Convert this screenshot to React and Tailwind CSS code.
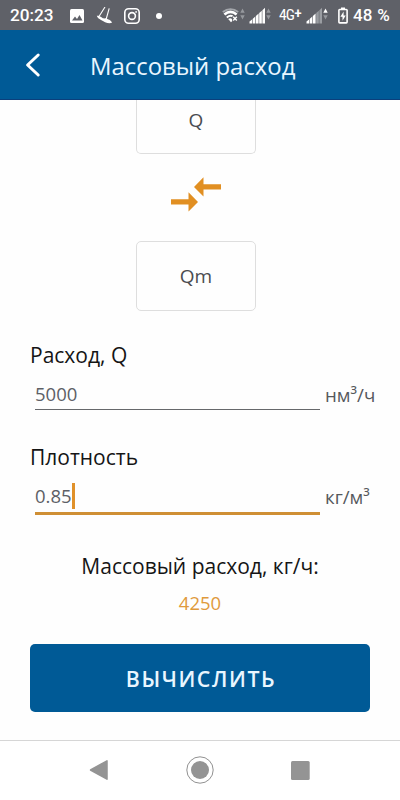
import { useState } from 'react';

function DataArrows({ up = '#96999e', down = '#96999e', className }) {
  return (
    <svg viewBox="0 0 5 12" className={className}>
      <path d="M2.5 0.5 L4.7 4.8 H0.3 Z" fill={up} />
      <path d="M2.5 11.5 L4.7 7.2 H0.3 Z" fill={down} />
    </svg>
  );
}

function Signal({ weak, className }) {
  return (
    <svg viewBox="0 0 17 17" className={className}>
      <path d="M0.5 14.5 L3 12.5 V16.5 H0.5 Z M3.6 12 L6.3 9.6 V16.5 H3.6 Z M6.9 9 L9.6 6.6 V16.5 H6.9 Z" fill="#fff" />
      <path d="M10.2 6 L12.8 3.7 V16.5 H10.2 Z" fill={weak ? '#9a9da2' : '#fff'} />
      <path d="M13.4 3.2 L16 0.8 V16.5 H13.4 Z" fill={weak ? '#9a9da2' : '#fff'} />
    </svg>
  );
}

function StatusBar() {
  return (
    <div className="flex h-[30px] flex-shrink-0 items-center bg-[#5f6168] pl-[10px] pt-px font-[Roboto,sans-serif] text-white">
      <span className="w-[60px] text-[17.2px] font-medium leading-none">20:23</span>

      {/* Gallery */}
      <svg viewBox="0 0 14 14" className="h-[14px] w-[14px] flex-shrink-0">
        <rect width="14" height="14" rx="1.5" fill="#fff" />
        <path d="M2 11.5 L5 7.5 L7 10 L9.5 6 L12.5 11.5 Z" fill="#5f6168" />
      </svg>

      {/* Step counter */}
      <svg viewBox="0 0 17 17" className="ml-[12px] h-[17px] w-[17px] flex-shrink-0">
        <path d="M0.8 8.8 C2.5 8.3 4 9 5.5 10.3 C7 11.8 8.5 11.3 10 11.3 C12.5 12.5 15.5 13.5 16 15.8 C12.5 17.2 8 14.8 5 13 C3 11.8 1.3 10.8 0.8 8.8 Z" fill="#fff" />
        <path d="M9 0 L3.3 9 M13.2 1.3 L10.2 12" stroke="#fff" strokeWidth="1.1" fill="none" />
      </svg>

      {/* Instagram */}
      <svg viewBox="0 0 16 16" className="ml-[11px] h-4 w-4 flex-shrink-0" fill="none" stroke="#fff" strokeWidth="1.6">
        <rect x="0.8" y="0.8" width="14.4" height="14.4" rx="3.8" />
        <circle cx="8" cy="8" r="3.4" />
        <circle cx="12.1" cy="3.9" r="0.9" fill="#fff" stroke="none" />
      </svg>

      <span className="ml-4 h-[6px] w-[6px] flex-shrink-0 rounded-full bg-white" />

      {/* Wi-Fi without internet */}
      <svg viewBox="0 0 17 15" className="ml-[60px] h-[15px] w-[17px] flex-shrink-0" fill="none">
        <path d="M0.8 4 C5.5 0.3 11.5 0.3 16.2 4" stroke="#a3a6ab" strokeWidth="1.8" />
        <path d="M2.4 6.5 C6.2 3.1 10.8 3.1 14.6 6.5" stroke="#fff" strokeWidth="2.6" />
        <path d="M4.8 9.4 C7 7.6 9 7.4 10.6 8.2" stroke="#fff" strokeWidth="2" />
        <path d="M6.2 11 Q8 9.6 9.8 10.8 L10.3 13 L9 14.3 Z" fill="#fff" />
        <path d="M11.2 8.8 L14.8 12.6 M14.8 8.8 L11.2 12.6" stroke="#fff" strokeWidth="1.4" />
      </svg>
      <DataArrows className="mb-1 ml-px h-[12px] w-[5px] flex-shrink-0" />
      <Signal className="ml-1 h-[17px] w-[17px] flex-shrink-0" />
      <DataArrows className="mb-1 h-[12px] w-[5px] flex-shrink-0" />

      <span className="ml-[8px] flex w-[27px] items-center whitespace-nowrap font-['Roboto_Condensed',Roboto,sans-serif] text-[15.5px] leading-none tracking-[-0.8px]">
        4G<span className="pb-1 font-medium">+</span>
      </span>
      <Signal weak className="h-[17px] w-[17px] flex-shrink-0" />
      <DataArrows up="#fff" className="mb-1 h-[12px] w-[5px] flex-shrink-0" />

      {/* Charging battery */}
      <svg viewBox="0 0 10 17" className="ml-[10px] h-[17px] w-[10px] flex-shrink-0" fill="none">
        <path d="M3 0.5 H7 V2 H3 Z" fill="#fff" />
        <rect x="0.9" y="2.5" width="8.2" height="13.4" rx="0.8" stroke="#fff" strokeWidth="1.6" />
        <path d="M5.6 4.6 L2.4 9.8 H4.5 V13.8 L7.7 8.5 H5.6 Z" fill="#fff" />
      </svg>
      <span className="ml-[5px] whitespace-nowrap text-[17px] font-medium leading-none tracking-[0.2px]">48 %</span>
    </div>
  );
}

function Header({ title }) {
  return (
    <header className="flex h-[70px] flex-shrink-0 items-center border-b border-[#0b3f7c] bg-[#005a96] pl-[24px]">
      <button className="w-[66px]" aria-label="Назад">
        <svg viewBox="0 0 17 26" className="h-[26px] w-[17px]" fill="none" stroke="#fff" strokeWidth="3" strokeLinecap="round" strokeLinejoin="round">
          <path d="M14.2 3 L3.6 13 L14.2 23" />
        </svg>
      </button>
      <h1 className="whitespace-nowrap pt-[2px] text-[23.9px] leading-none text-[#e9f6ff]">{title}</h1>
    </header>
  );
}

function Field({ label, value, unit, focused, onChange }) {
  return (
    <div className="h-[102px]">
      <p className="h-[30px] text-[21px] leading-[30px] text-[#151515]">{label}</p>
      <div className="flex pl-[5px]">
        {focused ? (
          <div className="flex h-[43px] w-[285px] flex-shrink-0 items-center border-b-[3px] border-[#cf8f35] pt-[7px] text-[18.5px] text-[#5d6066]">
            <span>{value}</span>
            <span className="h-[26px] w-[3px] flex-shrink-0 bg-[#e0912a]" />
          </div>
        ) : (
          <input
            value={value}
            onChange={onChange}
            className="mb-[3px] h-[40px] w-[285px] flex-shrink-0 border-b border-[#66686b] pt-[8px] text-[18.5px] text-[#5d6066] outline-none"
          />
        )}
        <span className="ml-[5px] whitespace-nowrap pt-[12px] text-[18.7px] leading-[26px] text-[#55585c]">{unit}</span>
      </div>
    </div>
  );
}

function NavBar() {
  return (
    <nav className="flex h-[60px] flex-shrink-0 items-center justify-between border-t border-[#d6d6d6] bg-white px-[85px] pb-[2px]">
      <svg viewBox="0 0 28 28" className="h-7 w-7">
        <path d="M5.5 14 L22 4.8 V23.2 Z" fill="#949494" stroke="#949494" strokeWidth="1.5" strokeLinejoin="round" />
      </svg>
      <svg viewBox="0 0 28 28" className="h-7 w-7">
        <circle cx="14" cy="14" r="13.2" fill="none" stroke="#858585" strokeWidth="0.9" />
        <circle cx="14" cy="14" r="9" fill="#949494" />
      </svg>
      <svg viewBox="0 0 28 28" className="h-7 w-7">
        <rect x="4" y="5" width="18.7" height="19" rx="1.5" fill="#949494" />
      </svg>
    </nav>
  );
}

export default function App() {
  const [flow, setFlow] = useState('5000');
  const density = '0.85';

  return (
    <div className="flex h-[800px] w-[400px] flex-col overflow-hidden bg-[#fefefe] font-['Open_Sans','Noto_Sans',sans-serif]">
      <StatusBar />
      <Header title="Массовый расход" />

      <main className="flex flex-1 flex-col px-[30px]">
        {/* Conversion direction */}
        <div className="flex flex-col items-center pr-2">
          <div className="flex h-[54px] w-[120px] justify-center rounded-b-[5px] border border-t-0 border-[#dedede] pt-[7px] text-[19px] leading-[26px] text-[#4a4c50]">Q</div>
          <svg viewBox="0 0 52 36" className="mb-[29px] mt-[22px] h-9 w-[52px]" fill="#e18f22">
            <path d="M1 23.3 H18.5 V16.3 L28 26 L18.5 35.5 V28.5 H1 Z" />
            <path d="M51 8.3 H33.5 V1.3 L24 11 L33.5 20.5 V13.5 H51 Z" />
          </svg>
          <div className="flex h-[70px] w-[120px] items-center justify-center rounded-[5px] border border-[#dedede] pt-px text-[19px] text-[#4a4c50]">Qm</div>
        </div>

        <div className="mt-[29px]">
          <Field label="Расход, Q" value={flow} unit="нм³/ч" onChange={e => setFlow(e.target.value)} />
          <Field label="Плотность" value={density} unit="кг/м³" focused />
        </div>

        <p className="mt-[7px] text-center text-[21px] leading-[30px] text-[#151515]">Массовый расход, кг/ч:</p>
        <p className="mt-[7px] text-center text-[18.5px] leading-[30px] text-[#e09a3c]">4250</p>

        <button className="mt-[26px] h-[68px] w-full rounded-[5px] bg-[#005a96] pl-[2px] pt-px text-[21.3px] font-semibold tracking-[1.6px] text-[#e9f6ff]">
          ВЫЧИСЛИТЬ
        </button>
      </main>

      <NavBar />
    </div>
  );
}
